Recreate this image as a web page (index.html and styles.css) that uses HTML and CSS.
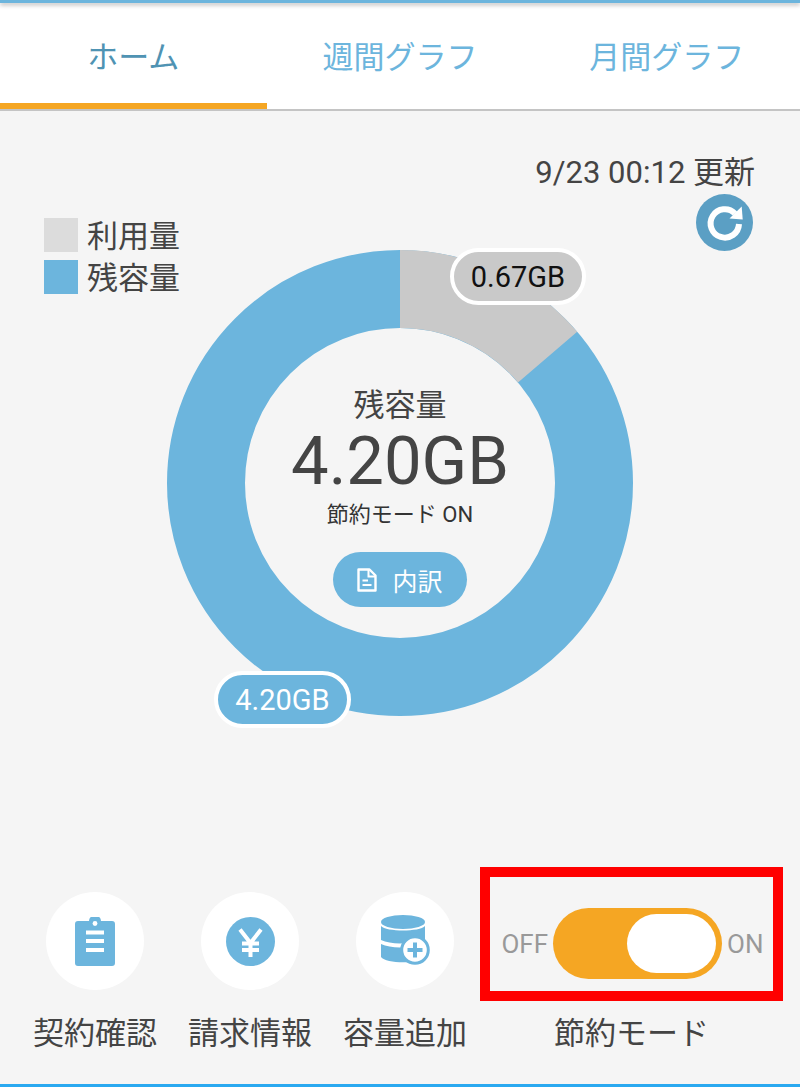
FILE: index.html
```html
<!DOCTYPE html>
<html lang="ja">
<head>
  <meta charset="UTF-8">
  <meta name="viewport" content="width=device-width, initial-scale=1.0">
  <title>ホーム</title>
  <link rel="stylesheet" href="styles.css">
</head>
<body>
  <div id="app">
    <div class="top-line"></div>

    <div class="tabs">
      <div class="tab active">ホーム</div>
      <div class="tab">週間グラフ</div>
      <div class="tab">月間グラフ</div>
    </div>

    <div class="main">
      <div class="summary">
        <ul class="legend">
          <li><span class="swatch used"></span><span class="legend-text">利用量</span></li>
          <li><span class="swatch left"></span><span class="legend-text">残容量</span></li>
        </ul>
        <div class="update">
          <div class="update-text">9/23 00:12 更新</div>
          <svg class="refresh" width="57" height="57" viewBox="0 0 57 57">
            <circle cx="28.5" cy="28.5" r="28.5" fill="#5b9fc4"/>
            <path d="M39 19.5A14.2 14.2 0 1 0 43 30" fill="none" stroke="#fff" stroke-width="6"/>
            <path d="M33.5 24.5L46.7 25.5L45.7 12.5Z" fill="#fff"/>
          </svg>
        </div>
      </div>

      <div class="chart">
        <svg class="donut" width="466" height="466" viewBox="0 0 466 466">
          <circle cx="233" cy="233" r="194" fill="none" stroke="#6cb5dd" stroke-width="78"/>
          <path d="M233 0A233 233 0 0 1 410.2 81.7L351 132.4A155 155 0 0 0 233 78Z" fill="#c9c9c9"/>
        </svg>
        <div class="chart-center">
          <div class="center-title">残容量</div>
          <div class="center-value">4.20GB</div>
          <div class="center-mode">節約モード ON</div>
          <div class="detail-btn">
            <svg width="20" height="24" viewBox="0 0 20 24">
              <path d="M1.5 1.5H12.5L18.5 7.5V22.5H1.5Z" fill="none" stroke="#fff" stroke-width="2.4" stroke-linejoin="round"/>
              <path d="M11.5 2V8.5H18" fill="none" stroke="#fff" stroke-width="2"/>
              <path d="M5.5 12.5H11M5.5 17H14.5" fill="none" stroke="#fff" stroke-width="2"/>
            </svg>
            内訳
          </div>
        </div>
        <div class="pill pill-used">0.67GB</div>
        <div class="pill pill-left">4.20GB</div>
      </div>

      <div class="footer">
        <div class="nav-item">
          <div class="nav-icon">
            <svg width="40" height="49" viewBox="0 0 40 49">
              <path d="M3 4H14A6 5.5 0 0 1 26 4H37Q40 4 40 7V46Q40 49 37 49H3Q0 49 0 46V7Q0 4 3 4Z" fill="#6cb5dd"/>
              <circle cx="20" cy="6.5" r="2.4" fill="#fff"/>
              <path d="M11 15.5H29M11 24H29M11 33H29" stroke="#fff" stroke-width="4"/>
            </svg>
          </div>
          <div class="nav-label">契約確認</div>
        </div>
        <div class="nav-item">
          <div class="nav-icon">
            <svg width="49" height="49" viewBox="0 0 49 49">
              <circle cx="24.5" cy="24.5" r="24.5" fill="#6cb5dd"/>
              <path d="M14 12.5L24.5 26L35 12.5M24.5 26V40M16 26.5H33M16 33H33" fill="none" stroke="#fff" stroke-width="4"/>
            </svg>
          </div>
          <div class="nav-label">請求情報</div>
        </div>
        <div class="nav-item">
          <div class="nav-icon">
            <svg width="49" height="52" viewBox="0 0 49 52">
              <ellipse cx="22" cy="7" rx="22" ry="7" fill="#6cb5dd"/>
              <path d="M0 11C5 17 39 17 44 11V24C36 28 12 31 0 25Z" fill="#6cb5dd"/>
              <path d="M0 29C12 35 36 32 44 28V42C39 49 5 49 0 42Z" fill="#6cb5dd"/>
              <circle cx="34" cy="35" r="13.3" fill="#fff" stroke="#6cb5dd" stroke-width="3"/>
              <path d="M34 27.5V42.5M26.5 35H41.5" stroke="#6cb5dd" stroke-width="4"/>
            </svg>
          </div>
          <div class="nav-label">容量追加</div>
        </div>
        <div class="saving">
          <div class="saving-box">
            <span class="saving-text">OFF</span>
            <div class="switch"><div class="knob"></div></div>
            <span class="saving-text">ON</span>
          </div>
          <div class="nav-label">節約モード</div>
        </div>
      </div>
    </div>
  </div>
</body>
</html>
```

FILE: styles.css
```css
body {
    font-family: Roboto, "Noto Sans CJK JP", sans-serif;
    margin: 0;
    padding: 0;
    background-color: #f5f5f5;
    color: #444444;
}

#app {
    display: flex;
    flex-direction: column;
    height: 100vh;
    overflow: hidden;
    border-bottom: 3px solid #2aa9f0;
    box-sizing: border-box;
}

.top-line {
    height: 3px;
    background-color: #6cb5dd;
    box-shadow: 0px 2px 4px rgba(0, 0, 0, 0.3);
    position: relative;
}

.tabs {
    display: flex;
    background-color: #ffffff;
    border-bottom: 2px solid #c4c4c4;
}

.tab {
    flex: 1;
    height: 106px;
    box-sizing: border-box;
    padding-top: 33px;
    text-align: center;
    font-size: 31px;
    line-height: 44px;
    color: #6cb5dd;
}

.tab.active {
    color: #4f93b3;
    border-bottom: 6px solid #f5a623;
}

.main {
    flex-grow: 1;
    display: flex;
    flex-direction: column;
}

.summary {
    display: flex;
    justify-content: space-between;
    align-items: flex-start;
    padding: 41px 45px 0 44px;
    height: 98px;
}

.legend {
    list-style: none;
    margin: 62px 0 0;
    padding: 0;
    position: relative;
    z-index: 1;
}

.legend li {
    display: flex;
    align-items: center;
    gap: 9px;
    height: 42px;
    font-size: 31px;
}

.legend-text {
    margin-top: -4px;
}

.swatch {
    width: 34px;
    height: 34px;
}

.swatch.used {
    background-color: #dcdcdc;
}

.swatch.left {
    background-color: #6cb5dd;
}

.update {
    display: flex;
    flex-direction: column;
    align-items: flex-end;
}

.update-text {
    font-size: 31px;
    line-height: 42px;
}

.refresh {
    margin-right: 2px;
}

.chart {
    position: relative;
    width: 466px;
    height: 466px;
    margin: 0 auto;
}

.donut {
    display: block;
}

.chart-center {
    position: absolute;
    top: 0;
    left: 0;
    width: 100%;
    height: 100%;
    display: flex;
    flex-direction: column;
    align-items: center;
    padding-top: 134px;
    box-sizing: border-box;
}

.center-title {
    font-size: 31px;
    line-height: 44px;
}

.center-value {
    font-size: 67px;
    line-height: 67px;
}

.center-mode {
    font-size: 22px;
    line-height: 32px;
    margin-top: 4px;
    color: #333333;
}

.detail-btn {
    display: flex;
    align-items: center;
    justify-content: center;
    gap: 15px;
    width: 134px;
    height: 55px;
    margin-top: 21px;
    border-radius: 28px;
    background-color: #6cb5dd;
    color: #ffffff;
    font-size: 25px;
}

.pill {
    position: absolute;
    height: 57px;
    box-sizing: border-box;
    display: flex;
    align-items: center;
    justify-content: center;
    border: 4px solid #ffffff;
    border-radius: 29px;
    font-size: 29px;
}

.pill-used {
    top: -2px;
    left: 283px;
    width: 136px;
    background-color: #c9c9c9;
    color: #111111;
}

.pill-left {
    top: 421px;
    left: 47px;
    width: 137px;
    background-color: #6cb5dd;
    color: #ffffff;
}

.footer {
    display: flex;
    align-items: flex-start;
    gap: 31px;
    margin-top: auto;
    padding: 0 0 30px 33px;
}

.nav-item {
    display: flex;
    flex-direction: column;
    align-items: center;
    width: 124px;
    padding-top: 25px;
}

.nav-icon {
    display: flex;
    align-items: center;
    justify-content: center;
    width: 98px;
    height: 98px;
    margin-bottom: 24px;
    border-radius: 50%;
    background-color: #ffffff;
}

.nav-label {
    font-size: 31px;
    line-height: 40px;
    white-space: nowrap;
}

.saving {
    display: flex;
    flex-direction: column;
    align-items: center;
    margin-left: -18px;
}

.saving-box {
    display: flex;
    align-items: center;
    justify-content: center;
    gap: 5px;
    width: 303px;
    height: 134px;
    margin-bottom: 13px;
    padding-top: 19px;
    padding-left: 2px;
    box-sizing: border-box;
    border: 10px solid #ff0000;
}

.saving-text {
    font-size: 26px;
    color: #999999;
}

.switch {
    display: flex;
    justify-content: flex-end;
    align-items: center;
    width: 169px;
    height: 71px;
    padding-right: 6px;
    box-sizing: border-box;
    border-radius: 36px;
    background-color: #f5a623;
}

.knob {
    width: 89px;
    height: 59px;
    border-radius: 30px;
    background-color: #ffffff;
}
```
